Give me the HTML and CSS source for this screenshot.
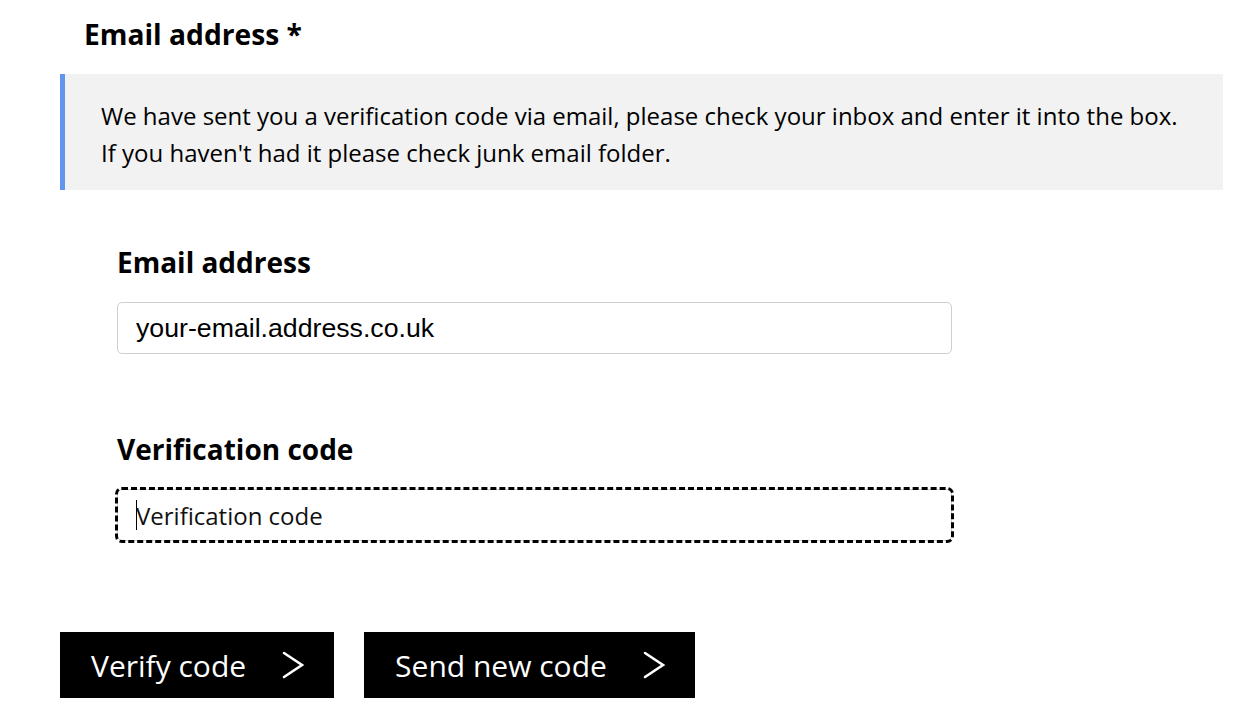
FILE: index.html
```html
<!DOCTYPE html>
<html lang="en">
<head>
<meta charset="utf-8">
<title>Verify email</title>
<link rel="stylesheet" href="styles.css">
</head>
<body>
<div class="page">
  <h2 class="section-title">Email address *</h2>
  <div class="info">
    <p>We have sent you a verification code via email, please check your inbox and enter it into the box.<br>If you haven't had it please check junk email folder.</p>
  </div>
  <div class="fields">
    <div class="field field-email">
      <label class="field-label" for="email">Email address</label>
      <input class="text-input email-input" id="email" type="text" value="your-email.address.co.uk">
    </div>
    <div class="field field-code">
      <label class="field-label" for="code">Verification code</label>
      <div class="text-input code-input"><span class="caret"></span><span class="placeholder">Verification code</span></div>
    </div>
  </div>
  <div class="actions">
    <button class="btn" type="button"><span>Verify code</span><svg class="chev" viewBox="0 0 24 28" width="24" height="28"><polyline points="3,2 21,14 3,26" fill="none" stroke="#fff" stroke-width="2.6" stroke-linecap="round" stroke-linejoin="miter"/></svg></button>
    <button class="btn" type="button"><span>Send new code</span><svg class="chev" viewBox="0 0 24 28" width="24" height="28"><polyline points="3,2 21,14 3,26" fill="none" stroke="#fff" stroke-width="2.6" stroke-linecap="round" stroke-linejoin="miter"/></svg></button>
  </div>
</div>
</body>
</html>
```

FILE: styles.css
```css
html, body {
  margin: 0;
  padding: 0;
  background: #fff;
}
body {
  font-family: "Open Sans", "Noto Sans", sans-serif;
  color: #000;
}
.page {
  margin-left: 60px;
  width: 1163px;
}
.section-title {
  margin: 0;
  padding: 16px 0 0 24px;
  font-size: 28.2px;
  line-height: 36px;
  font-weight: 700;
}
.info {
  margin-top: 22px;
  background: #f2f2f2;
  border-left: 5px solid #6495ed;
  padding: 23px 30px 19px 36px;
}
.info p {
  margin: 0;
  font-size: 24px;
  line-height: 37px;
}
.fields {
  padding-left: 57px;
}
.field-email {
  margin-top: 55px;
}
.field-code {
  margin-top: 78px;
}
.field-label {
  display: block;
  font-size: 28px;
  line-height: 34px;
  font-weight: 700;
}
.text-input {
  display: block;
  box-sizing: border-box;
  width: 835px;
  height: 52px;
  border: 1px solid #cfcfcf;
  border-radius: 5px;
  background: #fff;
  padding: 0 18px;
}
.email-input {
  margin-top: 23px;
  font-family: "Liberation Sans", Arial, sans-serif;
  font-size: 26.7px;
  color: #000;
  outline: none;
}
.code-input {
  margin-top: 23px;
  outline: 3px dashed #000;
  outline-offset: -1px;
  display: flex;
  align-items: center;
  position: relative;
}
.placeholder {
  font-size: 24px;
  color: #111;
}
.caret {
  display: inline-block;
  width: 1px;
  height: 30px;
  background: #000;
  margin-right: -1px;
}
.actions {
  display: flex;
  gap: 30px;
  margin-top: 91px;
}
.btn {
  display: flex;
  align-items: center;
  gap: 35px;
  height: 66px;
  padding: 0 29px 0 31px;
  border: 0;
  border-radius: 0;
  background: #000;
  color: #fff;
  font-family: "Open Sans", "Noto Sans", sans-serif;
  font-size: 30px;
  cursor: pointer;
}
.chev {
  display: block;
}
```
